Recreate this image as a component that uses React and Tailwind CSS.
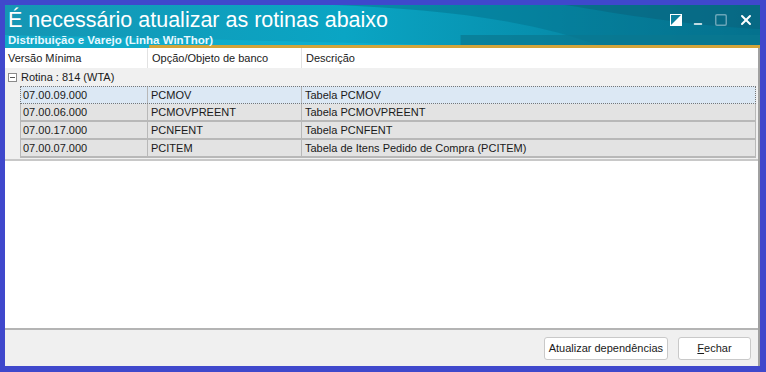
import { Minus, Square, X } from 'lucide-react'

const rows = [
  { versao: '07.00.09.000', opcao: 'PCMOV', descricao: 'Tabela PCMOV', selected: true },
  { versao: '07.00.06.000', opcao: 'PCMOVPREENT', descricao: 'Tabela PCMOVPREENT' },
  { versao: '07.00.17.000', opcao: 'PCNFENT', descricao: 'Tabela PCNFENT' },
  { versao: '07.00.07.000', opcao: 'PCITEM', descricao: 'Tabela de Itens Pedido de Compra (PCITEM)' },
]

function TitleBar() {
  return (
    <div className="relative h-[43px] overflow-hidden bg-[linear-gradient(90deg,#1596b4_0%,#0aa5c4_45%,#0790ae_70%,#066f8c_100%)]">
      <svg className="absolute inset-0 h-full w-full" viewBox="0 0 754 43" preserveAspectRatio="none">
        <path d="M0 43 L0 30 C200 34 420 40 560 43 Z" fill="#10b6d4" opacity="0.6" />
        <path d="M330 0 C420 4 520 12 600 43 L754 43 L754 0 Z" fill="#04748f" opacity="0.55" />
        <path d="M560 0 C620 10 680 20 754 24 L754 0 Z" fill="#0a5f7a" opacity="0.5" />
        <rect x="455" y="30" width="299" height="13" fill="#0a7790" opacity="0.7" />
        <rect x="144" y="40" width="610" height="3" fill="#d3a43a" />
      </svg>
      <div className="relative px-[3px] pt-[2px] text-white">
        <div className="text-[21.5px] leading-[26px]">É necessário atualizar as rotinas abaixo</div>
        <div className="mt-[1px] text-[11.5px] font-bold leading-[12px] text-[#e8f8ff]">Distribuição e Varejo (Linha WinThor)</div>
      </div>
      <div className="absolute right-[6px] top-[5px] flex items-center gap-[10px]">
        <svg width="12" height="12" viewBox="0 0 12 12">
          <rect x="0.5" y="0.5" width="11" height="11" fill="#0b7f9c" stroke="#fff" />
          <path d="M1 11 L11 1 L11 11 Z" fill="#fff" />
        </svg>
        <Minus className="mt-[8px] h-3 w-3 text-white" strokeWidth={3} />
        <Square className="h-3.5 w-3.5 text-[#6aa5b8]" strokeWidth={2.5} />
        <X className="h-4 w-4 text-white" strokeWidth={3} />
      </div>
    </div>
  )
}

export default function App() {
  return (
    <div className="h-[372px] w-[766px] bg-[#3f48cc] pl-[5px] pr-[6px] pt-[5px] pb-[6px] font-['Liberation_Sans',Arial,sans-serif]">
      <div className="flex h-full flex-col bg-white">
        <TitleBar />
        <div className="flex flex-1 flex-col border-r-2 border-[#a0a0a0] text-[11px] text-[#1a1a1a]">
          <div className="flex h-[20px] items-center bg-white">
            <div className="w-[143px] border-r border-[#e2e2e2] pl-[3px] leading-[20px]">Versão Mínima</div>
            <div className="w-[154px] border-r border-[#e2e2e2] pl-[4px] leading-[20px]">Opção/Objeto de banco</div>
            <div className="flex-1 pl-[4px] leading-[20px]">Descrição</div>
          </div>
          <div className="border-b-2 border-[#c8c8c8] bg-[#f0f0f0] pb-[1px]">
            <div className="flex h-[18px] items-center gap-[4px] pl-[3px]">
              <span className="flex h-[9px] w-[9px] items-center justify-center border border-[#8a8a8a] bg-white">
                <span className="h-px w-[5px] bg-[#555]" />
              </span>
              <span>Rotina : 814 (WTA)</span>
            </div>
            {rows.map((row) => (
              <div
                key={row.versao}
                className={`ml-[15px] mr-[2px] flex h-[18px] items-center ${
                  row.selected
                    ? 'border border-dotted border-[#777] bg-[#dce8f4]'
                    : 'border-b-2 border-x border-[#b8b8b8] bg-[#e3e3e3]'
                }`}
              >
                <div className="h-full w-[127px] border-r border-[#b8b8b8] pl-[2px] leading-[16px]">{row.versao}</div>
                <div className="h-full w-[154px] border-r border-[#b8b8b8] pl-[3px] leading-[16px]">{row.opcao}</div>
                <div className="h-full flex-1 pl-[3px] leading-[16px]">{row.descricao}</div>
              </div>
            ))}
          </div>
          <div className="flex-1 bg-white" />
          <div className="flex h-[38px] items-center justify-end gap-[10px] border-t-2 border-[#b4b4b4] bg-[#f0f0f0] pr-[7px]">
            <button
              type="button"
              className="h-[23px] rounded-[3px] border border-[#c9c9c9] bg-white px-[4px] text-[11px] text-[#1a1a1a]"
            >
              Atualizar dependências
            </button>
            <button
              type="button"
              className="h-[23px] w-[73px] rounded-[3px] border border-[#c9c9c9] bg-white text-[11px] text-[#1a1a1a]"
            >
              <span className="underline">F</span>echar
            </button>
          </div>
        </div>
      </div>
    </div>
  )
}
